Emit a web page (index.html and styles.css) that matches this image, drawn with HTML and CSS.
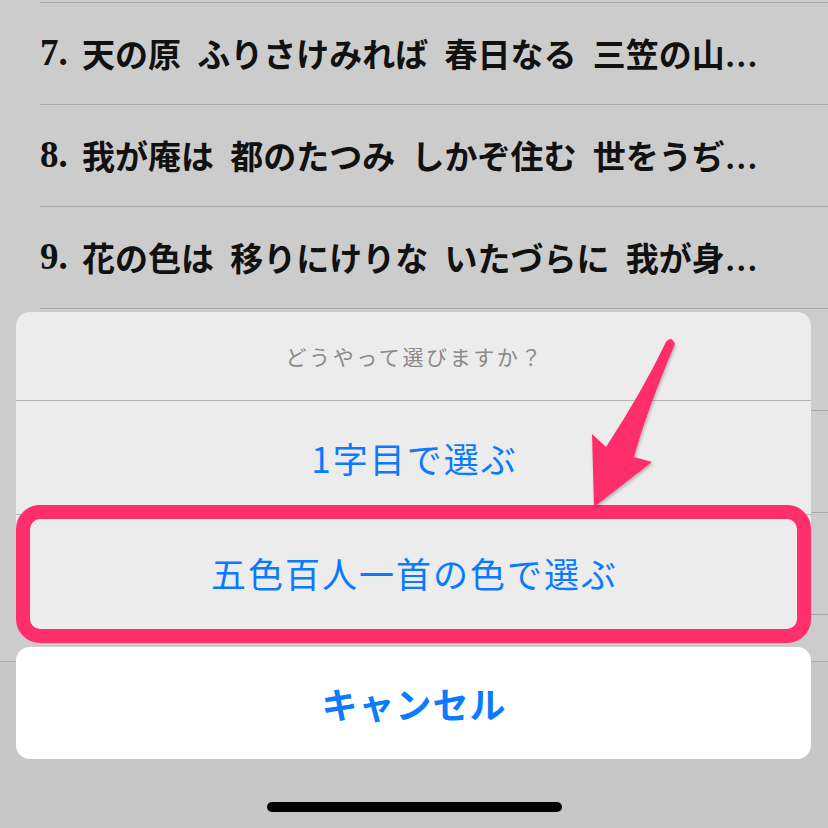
FILE: index.html
```html
<!DOCTYPE html>
<html lang="ja">
<head>
<meta charset="utf-8">
<title>百人一首</title>
<link rel="stylesheet" href="styles.css">
</head>
<body>
<div class="screen">
  <div class="list">
    <div class="row"></div>
    <div class="row"><span class="num">7.</span> 天の原 ふりさけみれば 春日なる 三笠の山…</div>
    <div class="row"><span class="num">8.</span> 我が庵は 都のたつみ しかぞ住む 世をうぢ…</div>
    <div class="row"><span class="num">9.</span> 花の色は 移りにけりな いたづらに 我が身…</div>
    <div class="row"></div>
    <div class="row"></div>
    <div class="row"></div>
  </div>

  <div class="toolbar"></div>

  <div class="sheet">
    <div class="group">
      <div class="title">どうやって選びますか？</div>
      <div class="action">1字目で選ぶ</div>
      <div class="action last">五色百人一首の色で選ぶ</div>
    </div>
    <div class="cancel">キャンセル</div>
  </div>

  <div class="highlight"></div>

  <svg class="arrow" viewBox="0 0 828 828" width="828" height="828" aria-hidden="true">
    <defs>
      <filter id="sh" x="-20%" y="-20%" width="140%" height="140%">
        <feDropShadow dx="1" dy="2" stdDeviation="1.5" flood-color="#000" flood-opacity="0.25"/>
      </filter>
    </defs>
    <path d="M594,507 L592,434 L606,447 Q642,392 666,342 Q671,335 675,344 Q647,410 634,457 L652,462 Z" fill="#fe2f6b" filter="url(#sh)"/>
  </svg>

  <div class="home"></div>
</div>
</body>
</html>
```
FILE: styles.css
```css
html, body {
  margin: 0;
  padding: 0;
}
body {
  background: #cccccc;
}
.screen {
  position: relative;
  width: 828px;
  height: 828px;
  overflow: hidden;
  background: #cccccc;
}
.list {
  margin-top: -99px;
  display: flex;
  flex-direction: column;
}
.row {
  margin-left: 40px;
  height: 102px;
  padding-bottom: 2px;
  box-sizing: border-box;
  border-bottom: 1px solid #a9a9a9;
  display: flex;
  align-items: center;
  gap: 0;
  font-family: "Liberation Serif", "Noto Sans CJK JP", serif;
  font-weight: 700;
  font-size: 33px;
  word-spacing: 8px;
  color: #111;
  white-space: pre;
}
.num {
  font-size: 37px;
  margin-right: -2px;
}
.toolbar {
  position: absolute;
  left: 0;
  right: 0;
  top: 661px;
  bottom: 0;
  background: #c7c7c7;
  border-top: 1px solid #a9a9a9;
}
.sheet {
  position: absolute;
  left: 16px;
  top: 312px;
  width: 795px;
  display: flex;
  flex-direction: column;
  gap: 18px;
  font-family: "Noto Sans CJK JP", "Noto Sans", sans-serif;
}
.group {
  background: #ececec;
  border-radius: 14px;
  overflow: hidden;
  display: flex;
  flex-direction: column;
}
.title {
  height: 88px;
  border-bottom: 1px solid #b4b4b4;
  display: flex;
  align-items: center;
  justify-content: center;
  font-size: 21px;
  letter-spacing: 2.6px;
  padding-left: 2.6px;
  color: #8a8a8a;
}
.action {
  height: 113px;
  border-bottom: 1px solid #b4b4b4;
  display: flex;
  align-items: center;
  justify-content: center;
  font-size: 35px;
  letter-spacing: 2px;
  padding-left: 2px;
  color: #0a7aff;
}
.action.last {
  height: 114px;
  border-bottom: none;
}
.cancel {
  height: 112px;
  background: #ffffff;
  border-radius: 14px;
  display: flex;
  align-items: center;
  justify-content: center;
  font-size: 36px;
  font-weight: 700;
  letter-spacing: 1px;
  padding-left: 1px;
  color: #0a7aff;
}
.highlight {
  position: absolute;
  left: 16px;
  top: 505px;
  width: 767px;
  height: 110px;
  border: 14px solid #fe2f6b;
  border-radius: 24px;
}
.arrow {
  position: absolute;
  left: 0;
  top: 0;
}
.home {
  position: absolute;
  left: 267px;
  top: 802px;
  width: 295px;
  height: 10px;
  border-radius: 5px;
  background: #000;
}
```
